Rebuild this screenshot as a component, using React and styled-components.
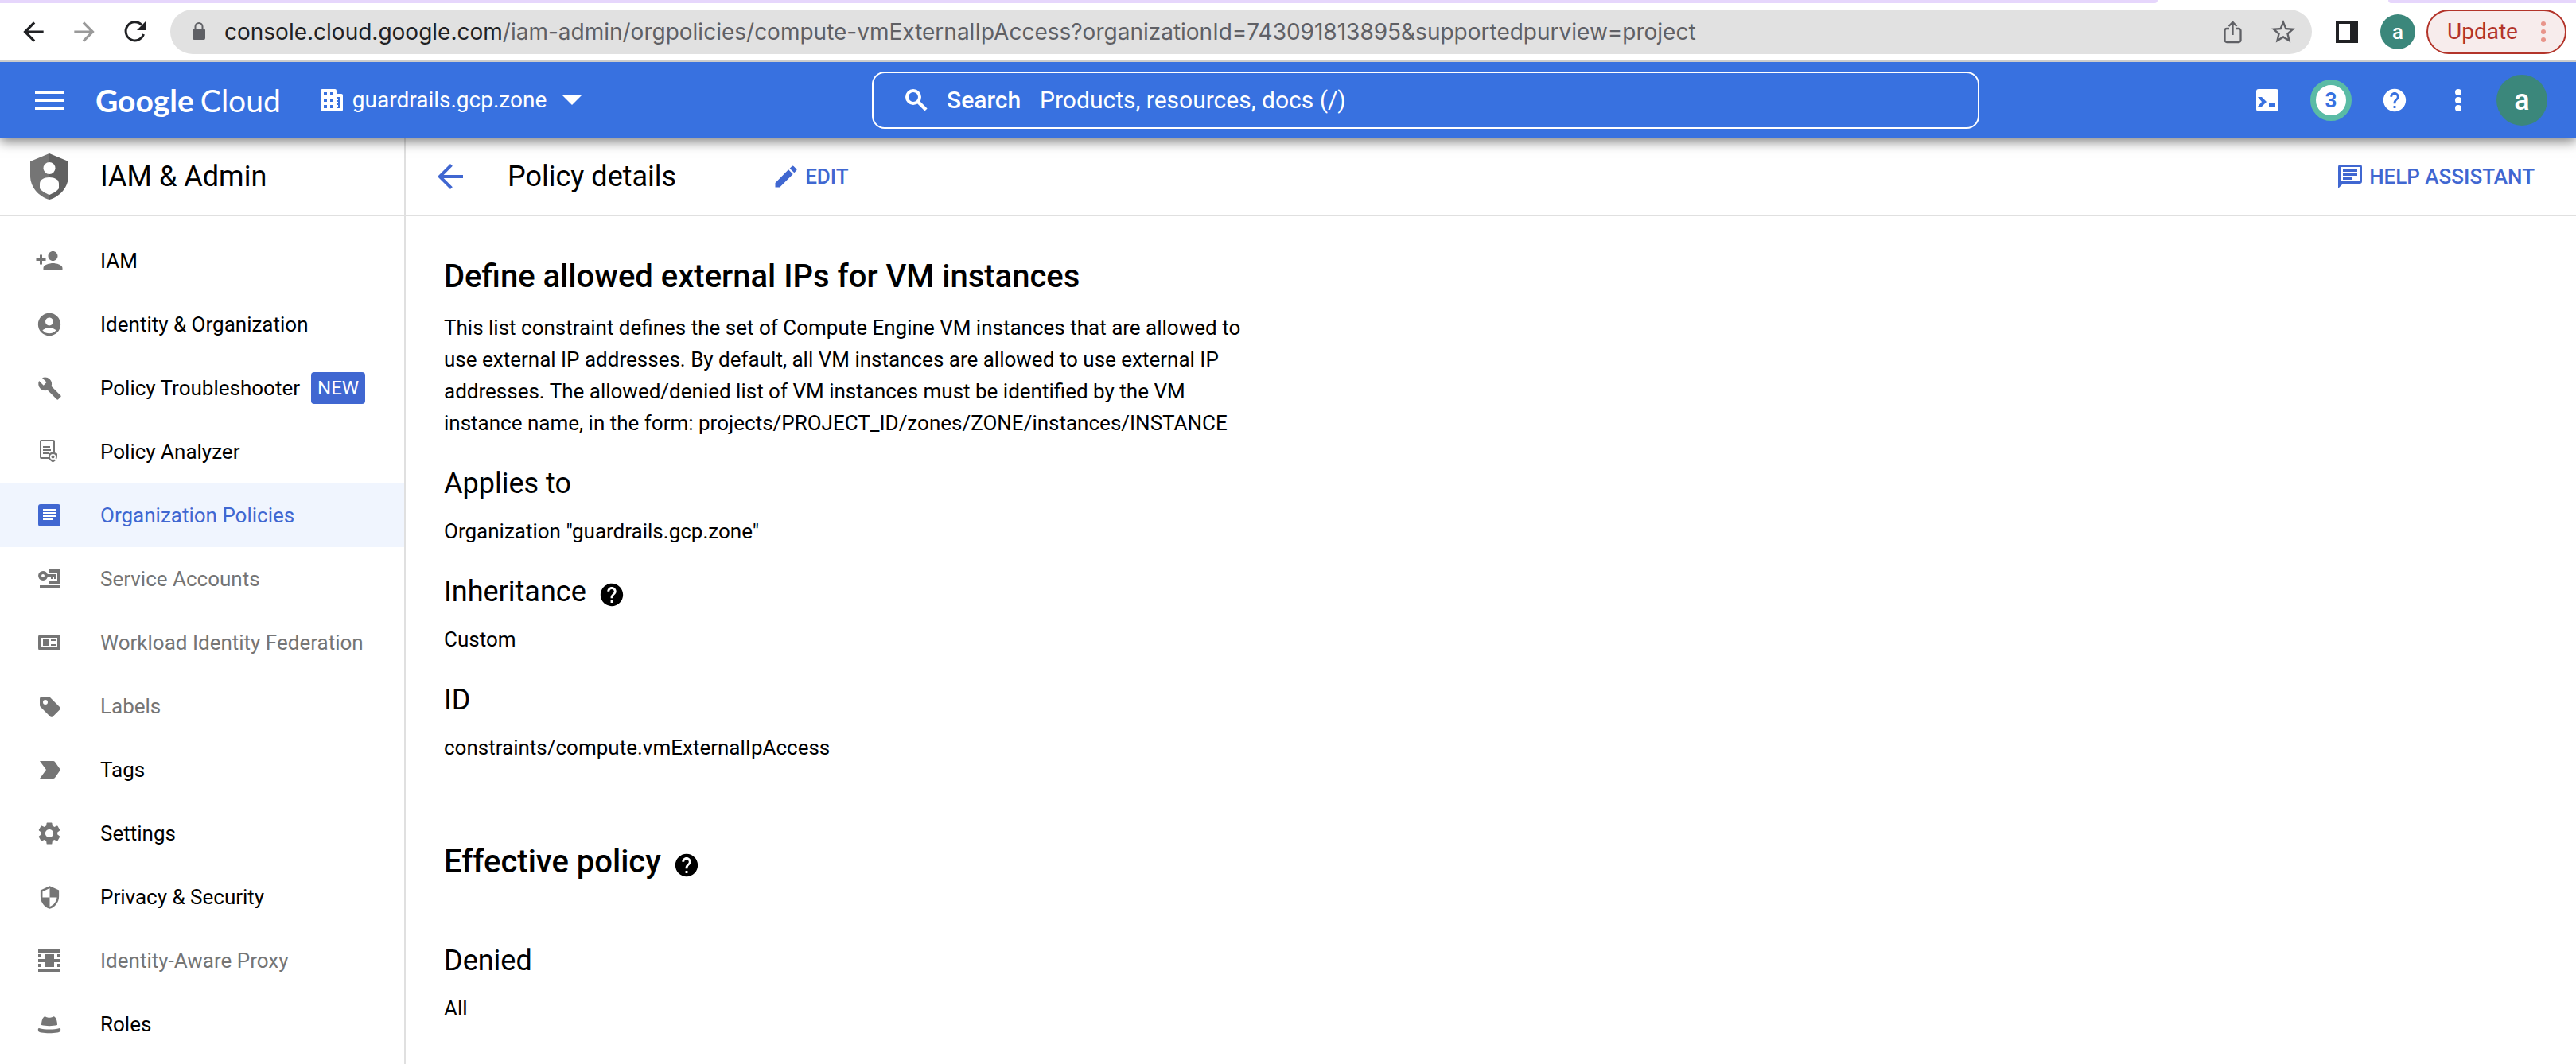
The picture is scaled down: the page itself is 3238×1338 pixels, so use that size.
import React from "react";
import styled, { createGlobalStyle } from "styled-components";
import {
  MdAccountCircle,
  MdBuild,
  MdPersonAdd,
  MdSettings,
  MdSecurity,
  MdHelp,
  MdArrowBack,
  MdArrowForward,
  MdEdit,
  MdStarBorder,
} from "react-icons/md";

const BLUE = "#3871e0";
const LINK = "#4067d1";
const GREY = "#757575";

const GlobalStyle = createGlobalStyle`
  *, *::before, *::after { box-sizing: border-box; }
  body {
    margin: 0;
    background: #fff;
    color: #000;
    font-family: Roboto, "Liberation Sans", sans-serif;
    font-size: 26px;
    line-height: 40px;
  }
  svg { display: block; flex: none; }
  button, input { font: inherit; color: inherit; }
`;

const Page = styled.div`
  display: flex;
  flex-direction: column;
  height: 100vh;
  overflow: hidden;
`;

/* ---------- browser chrome ---------- */

const TabStrip = styled.div`
  display: flex;
  justify-content: space-between;
  position: relative;
  z-index: 2;
  height: 4px;
  flex: none;
  background: #fff;
`;

const TabEdge = styled.div`
  background: #e6d6fc;
  ${(p) =>
    p.$trailing
      ? "width: 236px; border-bottom-left-radius: 12px;"
      : "flex: 1; margin-right: 290px; border-bottom-right-radius: 12px;"}
`;

const BrowserBar = styled.div`
  display: flex;
  align-items: center;
  position: relative;
  z-index: 2;
  height: 74px;
  flex: none;
  padding: 0 12px 0 24px;
  border-bottom: 2px solid #ccc;
  background: #fff;
`;

const IconButton = styled.button`
  display: flex;
  align-items: center;
  justify-content: center;
  flex: none;
  width: ${(p) => p.$size || 36}px;
  height: ${(p) => p.$size || 36}px;
  padding: 0;
  border: 0;
  background: none;
  color: ${(p) => p.$color || "inherit"};
  cursor: pointer;
`;

const HistoryButtons = styled.div`
  display: flex;
  gap: 28px;
  margin-right: 26px;
`;

const AddressBar = styled.div`
  display: flex;
  align-items: center;
  flex: 1;
  min-width: 0;
  height: 56px;
  padding: 0 18px;
  border-radius: 28px;
  background: #e1e1e1;
  color: #5f6065;
  font-family: Inter, Roboto, sans-serif;
  font-size: 28px;
`;

const Host = styled.label`
  margin-left: 14px;
  color: #202124;
`;

const PathInput = styled.input`
  flex: 1;
  min-width: 0;
  padding: 0;
  border: 0;
  outline: 0;
  background: none;
`;

const AddressActions = styled.div`
  display: flex;
  gap: 28px;
`;

const BrowserActions = styled.div`
  display: flex;
  align-items: center;
  gap: 24px;
  margin-left: 26px;
`;

const Avatar = styled.button`
  display: flex;
  align-items: center;
  justify-content: center;
  flex: none;
  width: ${(p) => p.$size}px;
  height: ${(p) => p.$size}px;
  padding: 0;
  border: 0;
  border-radius: 50%;
  background: #3b877b;
  color: #fff;
  font-size: ${(p) => (p.$size > 50 ? 36 : 26)}px;
  font-weight: 500;
  cursor: pointer;
`;

const UpdateButton = styled.button`
  display: flex;
  align-items: center;
  justify-content: space-between;
  width: 176px;
  height: 56px;
  margin-left: 14px;
  padding: 0 18px 0 24px;
  border: 2px solid #b3342a;
  border-radius: 28px;
  background: #f7ecec;
  color: #b3342a;
  font-size: 28px;
  cursor: pointer;
`;

/* ---------- console top bar ---------- */

const TopBar = styled.header`
  position: relative;
  z-index: 1;
  display: flex;
  align-items: center;
  height: 96px;
  flex: none;
  padding-right: 28px;
  background: ${BLUE};
  color: #fff;
  font-size: 28px;
  box-shadow: 0 4px 14px rgba(0, 0, 0, 0.5);
`;

const TopLeft = styled.div`
  display: flex;
  align-items: center;
  flex: 0 1 1096px;
  padding-left: 44px;
`;

const Logo = styled.a`
  display: flex;
  gap: 8px;
  margin-left: 40px;
  color: #fff;
  font-family: Lato, Roboto, sans-serif;
  font-size: 39px;
  text-decoration: none;
`;

const LogoStrong = styled.span`
  font-weight: 700;
`;

const ProjectPicker = styled.button`
  display: flex;
  align-items: center;
  gap: 12px;
  margin-left: 50px;
  padding: 0;
  border: 0;
  background: none;
  cursor: pointer;
`;

const Caret = styled.span`
  margin-left: 8px;
  border: 12px solid transparent;
  border-top-color: #fff;
  border-bottom-width: 0;
`;

const SearchBox = styled.label`
  display: flex;
  align-items: center;
  flex: 0 1 1392px;
  height: 72px;
  padding: 0 36px;
  border: 2px solid #fff;
  border-radius: 16px;
  font-size: 30px;
`;

const SearchLabel = styled.span`
  margin: 0 24px 0 20px;
  font-weight: 500;
`;

const SearchInput = styled.input`
  flex: 1;
  min-width: 0;
  padding: 0;
  border: 0;
  outline: 0;
  background: none;
  &::placeholder { color: #fff; opacity: 1; }
`;

const TopActions = styled.div`
  display: grid;
  grid-template-columns: repeat(5, 80px);
  align-items: center;
  justify-items: center;
  margin-left: auto;
`;

const Notifications = styled.button`
  width: 52px;
  height: 52px;
  padding: 0;
  border: 7px solid #5abba5;
  border-radius: 50%;
  background: #fff;
  color: ${BLUE};
  font-size: 26px;
  font-weight: 700;
  line-height: 38px;
  cursor: pointer;
`;

/* ---------- layout ---------- */

const Body = styled.div`
  display: flex;
  flex: 1;
  min-height: 0;
`;

const Sidebar = styled.aside`
  flex: none;
  width: 510px;
  border-right: 2px solid #e0e0e0;
`;

const SidebarHeader = styled.div`
  display: flex;
  align-items: center;
  gap: 40px;
  height: 98px;
  padding-left: 38px;
  border-bottom: 2px solid #e0e0e0;
  font-size: 36px;
`;

const Nav = styled.nav`
  display: flex;
  flex-direction: column;
  padding-top: 16px;
`;

const NavItem = styled.a`
  display: flex;
  align-items: center;
  height: 80px;
  padding-left: 44px;
  background: ${(p) => (p.$active ? "#f0f5fe" : "transparent")};
  color: ${(p) => (p.$active ? LINK : p.$muted ? GREY : "#000")};
  text-decoration: none;
  white-space: nowrap;
`;

const NavIcon = styled.span`
  display: flex;
  align-items: center;
  justify-content: center;
  width: 36px;
  height: 36px;
  margin-right: 46px;
  color: ${(p) => (p.$active ? LINK : GREY)};
`;

const NewBadge = styled.span`
  margin-left: 14px;
  padding: 0 8px;
  border-radius: 4px;
  background: ${LINK};
  color: #fff;
  font-size: 24px;
`;

const Main = styled.main`
  flex: 1;
  min-width: 0;
`;

const PageHeader = styled.div`
  display: flex;
  align-items: center;
  height: 98px;
  padding: 0 52px 0 34px;
  border-bottom: 2px solid #e0e0e0;
`;

const PageTitle = styled.h1`
  margin: 0 120px 0 50px;
  font-size: 36px;
  font-weight: 400;
`;

const ActionButton = styled.button`
  display: flex;
  align-items: center;
  gap: 6px;
  margin-left: ${(p) => (p.$end ? "auto" : 0)};
  padding: 0;
  border: 0;
  background: none;
  color: ${LINK};
  font-weight: 500;
  cursor: pointer;
`;

const Content = styled.div`
  padding: 48px;
`;

const Title = styled.h2`
  display: flex;
  align-items: center;
  gap: 15px;
  margin: 0;
  font-size: 40px;
  font-weight: 500;
  line-height: 56px;
`;

const Description = styled.p`
  max-width: 1010px;
  margin: 16px 0 0;
`;

const Field = styled.section`
  margin-top: 32px;
`;

const FieldTitle = styled.h3`
  display: flex;
  align-items: center;
  gap: 15px;
  margin: 0 0 16px;
  font-size: 36px;
  font-weight: 400;
  line-height: 48px;
`;

const FieldValue = styled.p`
  margin: 0;
`;

const EffectivePolicy = styled.section`
  margin-top: 96px;
`;

const Denied = styled.section`
  margin-top: 72px;
`;

const HelpSlot = styled.span`
  padding-top: 7px;
`;

/* ---------- icons ---------- */

const Glyph = ({ size = 36, box = "0 0 36 36", children }) => (
  <svg width={size} height={size} viewBox={box} fill="currentColor" aria-hidden="true">
    {children}
  </svg>
);

const ReloadIcon = () => (
  <Glyph>
    <path d="M28.500 21A11.500 11.500 0 1 1 26 9.500" fill="none" stroke="currentColor" strokeWidth="3" />
    <path d="M31 5v11H20z" />
  </Glyph>
);

const LockIcon = () => (
  <Glyph>
    <path d="M12 14h12a2 2 0 0 1 2 2v10a2 2 0 0 1-2 2H12a2 2 0 0 1-2-2V16a2 2 0 0 1 2-2z" />
    <path d="M13.500 15v-3.500a4.500 4.500 0 0 1 9 0V15" fill="none" stroke="currentColor" strokeWidth="2" />
  </Glyph>
);

const SearchIcon = () => (
  <Glyph>
    <circle cx="14" cy="14" r="8" fill="none" stroke="currentColor" strokeWidth="4" />
    <path d="M19.500 19.500l10.500 10.500" stroke="currentColor" strokeWidth="4.500" />
  </Glyph>
);

const ShareIcon = () => (
  <Glyph>
    <path
      d="M14 14H11a2.500 2.500 0 0 0-2.500 2.500v12A2.500 2.500 0 0 0 11 31h15a2.500 2.500 0 0 0 2.500-2.500v-12A2.500 2.500 0 0 0 26 14h-3M18.500 22V6M13.500 11l5-5 5 5"
      fill="none"
      stroke="currentColor"
      strokeWidth="2.300"
    />
  </Glyph>
);

const SidePanelIcon = () => (
  <Glyph>
    <path fillRule="evenodd" d="M4 4h28v28H4zM8 8v20h14V8z" />
  </Glyph>
);

const DotsIcon = ({ r = 4, gap = 10 }) => (
  <Glyph>
    <circle cx="18" cy={18 - gap} r={r} />
    <circle cx="18" cy="18" r={r} />
    <circle cx="18" cy={18 + gap} r={r} />
  </Glyph>
);

const MenuIcon = () => (
  <Glyph>
    <path d="M0 6h36v4H0zM0 16h36v4H0zM0 26h36v4H0z" />
  </Glyph>
);

const BuildingIcon = () => (
  <Glyph size={28} box="0 0 28 28">
    <path
      fillRule="evenodd"
      d="M2 0h16a2 2 0 0 1 2 2v4h6a2 2 0 0 1 2 2v18a2 2 0 0 1-2 2H2a2 2 0 0 1-2-2V2a2 2 0 0 1 2-2zM4 4v4h4V4zM12 4v4h4V4zM4 12v4h4v-4zM12 12v4h4v-4zM4 20v4h4v-4zM12 20v4h4v-4zM20 10v2h2v2h-2v2h2v2h-2v2h2v2h-2v2h5V10z"
    />
  </Glyph>
);

const ShellIcon = () => (
  <Glyph>
    <rect x="4" y="4" width="28" height="28" rx="3" />
    <path d="M6 14h5l6 6-6 6H6l5-6zM20 22h8v4h-8z" fill={BLUE} />
  </Glyph>
);

const ChatIcon = () => (
  <Glyph>
    <path
      fillRule="evenodd"
      d="M6 3h24a3 3 0 0 1 3 3v18a3 3 0 0 1-3 3H9l-6 6V6a3 3 0 0 1 3-3zM6 6v18h24V6z"
    />
    <path d="M9 9h18v3H9zM9 14h18v3H9zM9 19h12v3H9z" />
  </Glyph>
);

const ShieldIcon = () => (
  <svg width="48" height="58" viewBox="0 0 48 58" aria-hidden="true">
    <path d="M24 0L0 10v18c0 14 10 26 24 30z" fill="#757575" />
    <path d="M24 0l24 10v18c0 14-10 26-24 30z" fill="#616161" />
    <circle cx="24" cy="18.500" r="7.500" fill="#fff" />
    <path d="M24 30c7 0 12 3 12 8v6c-2 3-7 6-12 8-5-2-10-5-12-8v-6c0-5 5-8 12-8z" fill="#fff" />
  </svg>
);

const AnalyzerIcon = () => (
  <Glyph>
    <path
      fillRule="evenodd"
      d="M8 3h15a2 2 0 0 1 2 2v13h-2V5H8v20h9v2H8a2 2 0 0 1-2-2V5a2 2 0 0 1 2-2z"
    />
    <path d="M10 11h9v2h-9zM10 15h10v2H10zM10 19h7v2h-7z" />
    <path d="M22.500 18l5.500 2.500V24c0 3-2 6-5.500 7.500C19 30 17 27 17 24v-3.500z" />
    <circle cx="22.500" cy="24.500" r="2.800" fill="none" stroke="#fff" strokeWidth="1.600" />
    <path d="M24.500 26.500l2 2" stroke="#fff" strokeWidth="1.500" />
  </Glyph>
);

const PoliciesIcon = () => (
  <Glyph>
    <rect x="4" y="4" width="28" height="28" rx="3" />
    <path d="M10 10h16v2H10zM10 14h16v2H10zM10 18h16v2H10zM10 22h12v2H10z" fill="#fff" />
  </Glyph>
);

const ServiceIcon = () => (
  <Glyph>
    <path d="M18 6h14v18H18v-4h10V10H18zM6 26h26v4H6z" />
    <path
      fillRule="evenodd"
      d="M10 8a6 6 0 0 1 5.700 4H26v6h-2v-2h-2v2h-2v-2h-4.300A6 6 0 1 1 10 8zM10 12a2 2 0 1 0 0 4 2 2 0 0 0 0-4z"
    />
  </Glyph>
);

const WorkloadIcon = () => (
  <Glyph>
    <path
      fillRule="evenodd"
      d="M7 8h22a3 3 0 0 1 3 3v14a3 3 0 0 1-3 3H7a3 3 0 0 1-3-3V11a3 3 0 0 1 3-3zM8 12v12h20V12z"
    />
    <path d="M10 14h8v8h-8zM20 14h6v2h-6zM20 20h6v2h-6z" />
  </Glyph>
);

const LabelIcon = () => (
  <Glyph>
    <path
      fillRule="evenodd"
      d="M9 6h8a3 3 0 0 1 2 1l12 12a2.500 2.500 0 0 1 0 3.500l-8.500 8.500a2.500 2.500 0 0 1-3.500 0L7 19a3 3 0 0 1-1-2V9a3 3 0 0 1 3-3zM13 10a3 3 0 1 0 0 6 3 3 0 0 0 0-6z"
    />
  </Glyph>
);

const TagIcon = () => (
  <Glyph>
    <path d="M6 7h17a3 3 0 0 1 2 1l7 10-7 10a3 3 0 0 1-2 1H6l8-11z" />
  </Glyph>
);

const ProxyIcon = () => (
  <Glyph>
    <path d="M4 4h28v4H4zM4 28h28v4H4zM4 16h8v-6h12v6h8v4h-8v6H12v-6H4zM4 10h4v4H4zM28 10h4v4h-4zM4 22h4v4H4zM28 22h4v4h-4z" />
  </Glyph>
);

const RolesIcon = () => (
  <Glyph>
    <path d="M8 19c0-4 1-8 3-10 1-1 2-1 3 0 2 1 6 1 8 0 1-1 2-1 3 0 2 2 3 6 3 10-6 1.500-14 1.500-20 0z" />
    <path d="M5 23c8 2 18 2 26 0 1 0 1.500 1 1 3-.5 2-2 2-4 2.500-6 1-14 1-20 0-2-.5-3.500-.5-4-2.500-.5-2 0-3 1-3z" />
  </Glyph>
);

const NAV = [
  { label: "IAM", icon: <MdPersonAdd size={36} /> },
  { label: "Identity & Organization", icon: <MdAccountCircle size={34} /> },
  { label: "Policy Troubleshooter", icon: <MdBuild size={31} />, badge: "NEW" },
  { label: "Policy Analyzer", icon: <AnalyzerIcon /> },
  { label: "Organization Policies", icon: <PoliciesIcon />, active: true },
  { label: "Service Accounts", icon: <ServiceIcon />, muted: true },
  { label: "Workload Identity Federation", icon: <WorkloadIcon />, muted: true },
  { label: "Labels", icon: <LabelIcon />, muted: true },
  { label: "Tags", icon: <TagIcon /> },
  { label: "Settings", icon: <MdSettings size={34} /> },
  { label: "Privacy & Security", icon: <MdSecurity size={31} /> },
  { label: "Identity-Aware Proxy", icon: <ProxyIcon />, muted: true },
  { label: "Roles", icon: <RolesIcon /> },
];

const HelpTip = () => (
  <HelpSlot>
    <MdHelp size={34} />
  </HelpSlot>
);

export default function App() {
  return (
    <Page>
      <GlobalStyle />
      <TabStrip>
        <TabEdge />
        <TabEdge $trailing />
      </TabStrip>
      <BrowserBar>
        <HistoryButtons>
          <IconButton aria-label="Back" $color="#202124"><MdArrowBack size={38} /></IconButton>
          <IconButton aria-label="Forward" $color="#9a9a9a"><MdArrowForward size={38} /></IconButton>
          <IconButton aria-label="Reload" $color="#202124"><ReloadIcon /></IconButton>
        </HistoryButtons>
        <AddressBar>
          <LockIcon />
          <Host htmlFor="address">console.cloud.google.com</Host>
          <PathInput
            id="address"
            defaultValue="/iam-admin/orgpolicies/compute-vmExternalIpAccess?organizationId=743091813895&supportedpurview=project"
          />
          <AddressActions>
            <IconButton aria-label="Share"><ShareIcon /></IconButton>
            <IconButton aria-label="Bookmark"><MdStarBorder size={36} /></IconButton>
          </AddressActions>
        </AddressBar>
        <BrowserActions>
          <IconButton aria-label="Side panel" $color="#202124"><SidePanelIcon /></IconButton>
          <Avatar $size={44} aria-label="Profile">a</Avatar>
        </BrowserActions>
        <UpdateButton>
          Update
          <IconButton as="span" $size={18} $color="#e8948a"><DotsIcon r={3} /></IconButton>
        </UpdateButton>
      </BrowserBar>

      <TopBar>
        <TopLeft>
          <IconButton aria-label="Main menu"><MenuIcon /></IconButton>
          <Logo href="#">
            <LogoStrong>Google</LogoStrong>
            <span>Cloud</span>
          </Logo>
          <ProjectPicker>
            <BuildingIcon />
            guardrails.gcp.zone
            <Caret />
          </ProjectPicker>
        </TopLeft>
        <SearchBox>
          <SearchIcon />
          <SearchLabel>Search</SearchLabel>
          <SearchInput placeholder="Products, resources, docs (/)" />
        </SearchBox>
        <TopActions>
          <IconButton aria-label="Cloud Shell"><ShellIcon /></IconButton>
          <Notifications aria-label="3 notifications">3</Notifications>
          <IconButton aria-label="Help"><MdHelp size={34} /></IconButton>
          <IconButton aria-label="More"><DotsIcon /></IconButton>
          <Avatar $size={64} aria-label="Account">a</Avatar>
        </TopActions>
      </TopBar>

      <Body>
        <Sidebar>
          <SidebarHeader>
            <ShieldIcon />
            IAM &amp; Admin
          </SidebarHeader>
          <Nav>
            {NAV.map((n) => (
              <NavItem key={n.label} href="#" $active={n.active} $muted={n.muted}>
                <NavIcon $active={n.active}>{n.icon}</NavIcon>
                {n.label}
                {n.badge && <NewBadge>{n.badge}</NewBadge>}
              </NavItem>
            ))}
          </Nav>
        </Sidebar>
        <Main>
          <PageHeader>
            <IconButton aria-label="Back to policies" $size={44} $color={LINK}>
              <MdArrowBack size={48} />
            </IconButton>
            <PageTitle>Policy details</PageTitle>
            <ActionButton><MdEdit size={36} />EDIT</ActionButton>
            <ActionButton $end><ChatIcon />HELP ASSISTANT</ActionButton>
          </PageHeader>
          <Content>
            <Title>Define allowed external IPs for VM instances</Title>
            <Description>
              This list constraint defines the set of Compute Engine VM instances that are allowed to
              use external IP addresses. By default, all VM instances are allowed to use external IP
              addresses. The allowed/denied list of VM instances must be identified by the VM
              instance name, in the form: projects/PROJECT_ID/zones/ZONE/instances/INSTANCE
            </Description>
            <Field>
              <FieldTitle>Applies to</FieldTitle>
              <FieldValue>Organization "guardrails.gcp.zone"</FieldValue>
            </Field>
            <Field>
              <FieldTitle>Inheritance<HelpTip /></FieldTitle>
              <FieldValue>Custom</FieldValue>
            </Field>
            <Field>
              <FieldTitle>ID</FieldTitle>
              <FieldValue>constraints/compute.vmExternalIpAccess</FieldValue>
            </Field>
            <EffectivePolicy>
              <Title>Effective policy<HelpTip /></Title>
            </EffectivePolicy>
            <Denied>
              <FieldTitle>Denied</FieldTitle>
              <FieldValue>All</FieldValue>
            </Denied>
          </Content>
        </Main>
      </Body>
    </Page>
  );
}
